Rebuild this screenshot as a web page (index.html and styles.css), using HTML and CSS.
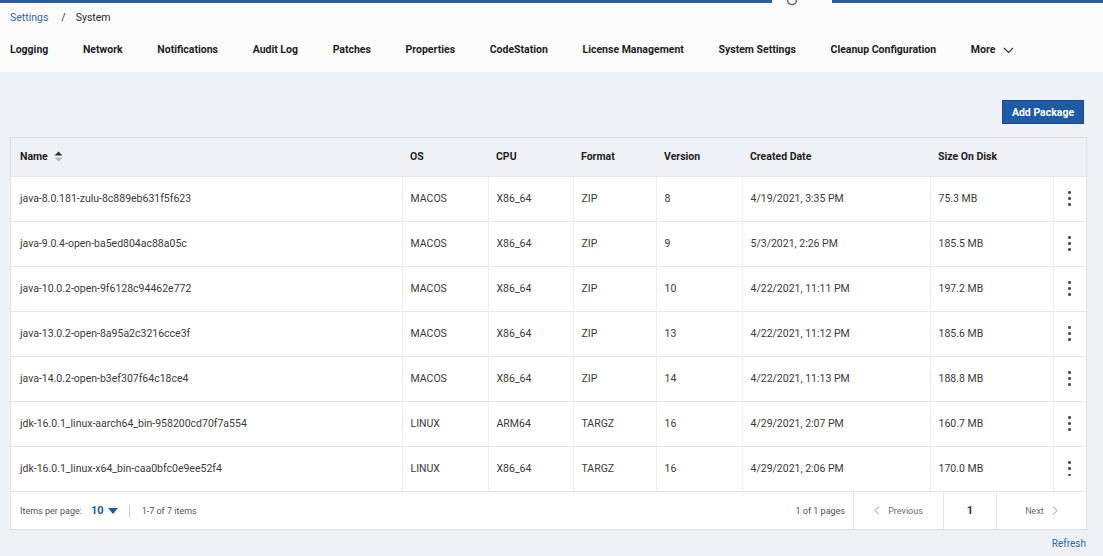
FILE: index.html
```html
<!DOCTYPE html>
<html>
<head>
<meta charset="utf-8">
<link rel="stylesheet" href="styles.css">
</head>
<body>
<header class="header">
  <div class="topbar">
    <div class="topbar-line left"></div>
    <div class="topbar-handle">
      <svg width="12" height="6" viewBox="0 0 12 6"><circle cx="6" cy="0" r="4.5" fill="none" stroke="#6b6f74" stroke-width="1.6"/></svg>
    </div>
    <div class="topbar-line right"></div>
  </div>
  <div class="breadcrumb">
    <a class="crumb-link">Settings</a>
    <span class="crumb-sep">/</span>
    <span class="crumb-current">System</span>
  </div>
  <nav class="tabs">
    <span class="tab">Logging</span>
    <span class="tab">Network</span>
    <span class="tab">Notifications</span>
    <span class="tab">Audit Log</span>
    <span class="tab">Patches</span>
    <span class="tab">Properties</span>
    <span class="tab">CodeStation</span>
    <span class="tab">License Management</span>
    <span class="tab">System Settings</span>
    <span class="tab">Cleanup Configuration</span>
    <span class="tab tab-more">More
      <svg class="chev" width="11" height="7" viewBox="0 0 11 7"><path d="M1 1 L5.5 5.5 L10 1" fill="none" stroke="#333" stroke-width="1.1"/></svg>
    </span>
  </nav>
</header>

<main class="content">
  <div class="toolbar">
    <button class="btn-primary">Add Package</button>
  </div>

  <div class="table-wrap">
    <table class="grid">
      <colgroup>
        <col class="c-name"><col class="c-os"><col class="c-cpu"><col class="c-format"><col class="c-version"><col class="c-date"><col class="c-size"><col class="c-menu">
      </colgroup>
      <thead>
        <tr>
          <th>Name <svg class="sort" width="9" height="11" viewBox="0 0 9 11"><path d="M0.5 4.5 L4.5 0.5 L8.5 4.5 Z" fill="#333"/><path d="M0.5 6.5 L4.5 10.5 L8.5 6.5 Z" fill="#b4b8bd"/></svg></th>
          <th>OS</th><th>CPU</th><th>Format</th><th>Version</th><th>Created Date</th><th>Size On Disk</th><th></th>
        </tr>
      </thead>
      <tbody>
        <tr><td>java-8.0.181-zulu-8c889eb631f5f623</td><td>MACOS</td><td>X86_64</td><td>ZIP</td><td>8</td><td>4/19/2021, 3:35 PM</td><td>75.3 MB</td><td class="menu"><span class="kebab"><i></i><i></i><i></i></span></td></tr>
        <tr><td>java-9.0.4-open-ba5ed804ac88a05c</td><td>MACOS</td><td>X86_64</td><td>ZIP</td><td>9</td><td>5/3/2021, 2:26 PM</td><td>185.5 MB</td><td class="menu"><span class="kebab"><i></i><i></i><i></i></span></td></tr>
        <tr><td>java-10.0.2-open-9f6128c94462e772</td><td>MACOS</td><td>X86_64</td><td>ZIP</td><td>10</td><td>4/22/2021, 11:11 PM</td><td>197.2 MB</td><td class="menu"><span class="kebab"><i></i><i></i><i></i></span></td></tr>
        <tr><td>java-13.0.2-open-8a95a2c3216cce3f</td><td>MACOS</td><td>X86_64</td><td>ZIP</td><td>13</td><td>4/22/2021, 11:12 PM</td><td>185.6 MB</td><td class="menu"><span class="kebab"><i></i><i></i><i></i></span></td></tr>
        <tr><td>java-14.0.2-open-b3ef307f64c18ce4</td><td>MACOS</td><td>X86_64</td><td>ZIP</td><td>14</td><td>4/22/2021, 11:13 PM</td><td>188.8 MB</td><td class="menu"><span class="kebab"><i></i><i></i><i></i></span></td></tr>
        <tr><td>jdk-16.0.1_linux-aarch64_bin-958200cd70f7a554</td><td>LINUX</td><td>ARM64</td><td>TARGZ</td><td>16</td><td>4/29/2021, 2:07 PM</td><td>160.7 MB</td><td class="menu"><span class="kebab"><i></i><i></i><i></i></span></td></tr>
        <tr><td>jdk-16.0.1_linux-x64_bin-caa0bfc0e9ee52f4</td><td>LINUX</td><td>X86_64</td><td>TARGZ</td><td>16</td><td>4/29/2021, 2:06 PM</td><td>170.0 MB</td><td class="menu"><span class="kebab"><i></i><i></i><i></i></span></td></tr>
      </tbody>
    </table>
    <div class="pager">
      <div class="pager-left">
        <span class="pager-label">Items per page:</span>
        <span class="per-page">10</span>
        <svg class="caret" width="10" height="6" viewBox="0 0 10 6"><path d="M0 0 L10 0 L5 6 Z" fill="#1f5aa6"/></svg>
        <span class="pager-divider"></span>
        <span class="pager-label">1-7 of 7 items</span>
      </div>
      <div class="pager-right">
        <span class="pager-label pages">1 of 1 pages</span>
        <span class="pager-cell prev"><svg width="6" height="9" viewBox="0 0 6 9"><path d="M5 0.5 L1 4.5 L5 8.5" fill="none" stroke="#8a8e93" stroke-width="1"/></svg>Previous</span>
        <span class="pager-cell page">1</span>
        <span class="pager-cell next">Next<svg width="6" height="9" viewBox="0 0 6 9"><path d="M1 0.5 L5 4.5 L1 8.5" fill="none" stroke="#8a8e93" stroke-width="1"/></svg></span>
      </div>
    </div>
  </div>
  <div class="refresh-row"><a class="refresh">Refresh</a></div>
</main>
</body>
</html>
```
FILE: styles.css
```css
* { box-sizing: border-box; }
html, body { margin: 0; padding: 0; }
body {
  font-family: Roboto, "Liberation Sans", Arial, sans-serif;
  font-size: 10.5px;
  color: #2a2a2a;
  background: #eef2f6;
  width: 1103px;
  height: 556px;
  overflow: hidden;
}

.header {
  background: #fbfbfc;
  height: 72px;
}
.topbar {
  display: flex;
  align-items: flex-start;
  height: 3px;
}
.topbar-line {
  height: 3px;
  background: #2a5d9e;
}
.topbar-line.left { width: 772px; }
.topbar-line.right { flex: 1; }
.topbar-handle {
  width: 60px;
  display: flex;
  justify-content: center;
  padding-right: 20px;
}
.topbar-handle svg { display: block; }

.breadcrumb {
  display: flex;
  align-items: center;
  padding: 8px 0 0 10px;
  line-height: 14px;
}
.crumb-link { color: #2f66ad; }
.crumb-sep { color: #333; margin: 0 10px 0 13px; }
.crumb-current { color: #2a2a2a; }

.tabs {
  display: flex;
  align-items: center;
  gap: 34.65px;
  padding: 18px 0 0 10px;
  line-height: 14px;
}
.tab {
  font-size: 10.5px;
  font-weight: 700;
  color: #1e1e1e;
  white-space: nowrap;
}
.tab-more {
  display: inline-flex;
  align-items: center;
  gap: 8px;
}
.tab-more .chev { margin-top: 1px; }

.content {
  padding: 28px 16px 0 10px;
}
.toolbar {
  display: flex;
  justify-content: flex-end;
  padding-right: 3px;
}
.btn-primary {
  font-family: inherit;
  font-size: 10.5px;
  font-weight: 700;
  color: #fff;
  background: #1f5aa6;
  border: 1px solid #1a4c8d;
  width: 82px;
  height: 24px;
  padding: 0;
}

.table-wrap {
  margin-top: 13px;
  border: 1px solid #dde2e7;
  border-bottom: none;
}
.grid {
  width: 100%;
  border-collapse: collapse;
  table-layout: fixed;
}
.c-name { width: 391px; }
.c-os { width: 86px; }
.c-cpu { width: 85px; }
.c-format { width: 83px; }
.c-version { width: 86px; }
.c-date { width: 188px; }
.c-size { width: 123px; }
.c-menu { width: 33px; }

.grid th {
  height: 38px;
  text-align: left;
  font-weight: 700;
  color: #1e1e1e;
  padding: 0 0 0 8px;
  background: #eef2f6;
  white-space: nowrap;
}
.grid th:first-child { padding-left: 9px; }
.grid th .sort { vertical-align: -2px; margin-left: 4px; }
.grid td {
  height: 45px;
  background: #fff;
  border-top: 1px solid #e3e6ea;
  border-left: 1px solid #eceef1;
  padding: 0 0 0 8px;
  color: #3a3a3a;
  white-space: nowrap;
  overflow: hidden;
}
.grid td:first-child { border-left: none; padding-left: 9px; }
.grid td.menu { padding: 0; text-align: center; }
.kebab {
  display: inline-flex;
  flex-direction: column;
  align-items: center;
  gap: 3.5px;
  vertical-align: middle;
}
.kebab i {
  display: block;
  width: 2.6px;
  height: 2.6px;
  border-radius: 50%;
  background: #4a4d52;
}

.pager {
  display: flex;
  justify-content: space-between;
  align-items: stretch;
  height: 39px;
  background: #fff;
  border-top: 1px solid #e3e6ea;
  border-bottom: 1px solid #dde2e7;
}
.pager-left {
  display: flex;
  align-items: center;
  padding-left: 9px;
}
.pager-label {
  font-size: 9px;
  color: #555;
}
.per-page {
  font-size: 11px;
  font-weight: 700;
  color: #1f5aa6;
  margin-left: 9px;
}
.caret { margin-left: 4px; }
.pager-divider {
  width: 1px;
  height: 12px;
  background: #c9cdd2;
  margin: 0 12px 0 11px;
}
.pager-right {
  display: flex;
  align-items: stretch;
}
.pages {
  display: flex;
  align-items: center;
  padding-right: 8px;
}
.pager-cell {
  display: flex;
  align-items: center;
  justify-content: center;
  gap: 8px;
  border-left: 1px solid #e3e6ea;
  font-size: 9px;
  color: #6a6e73;
}
.pager-cell.prev { width: 90px; }
.pager-cell.page { width: 53px; font-size: 11px; font-weight: 700; color: #333; }
.pager-cell.next { width: 90px; }

.refresh-row {
  display: flex;
  justify-content: flex-end;
  padding: 7px 0 0 0;
  line-height: 14px;
}
.refresh {
  color: #2f66ad;
  font-size: 10px;
  margin-right: 1px;
}
```
